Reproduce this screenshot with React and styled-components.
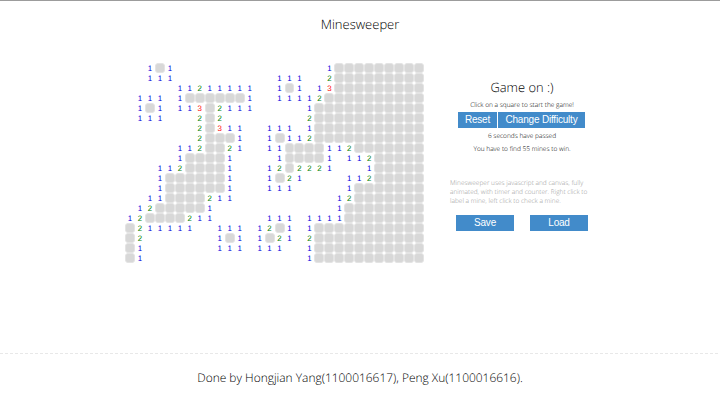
import React from "react";
import styled, { createGlobalStyle } from "styled-components";

const GlobalStyle = createGlobalStyle`
  * { box-sizing: border-box; }
  body {
    margin: 0;
    background: #fff;
    color: #000;
    font-family: "Open Sans", "Noto Sans", sans-serif;
    font-weight: 300;
    text-rendering: geometricPrecision;
    -webkit-font-smoothing: antialiased;
  }
`;

// "#" is a covered square, "." an empty opened one, digits count nearby mines.
const BOARD = [
  "..1#1...............1#########",
  "..111..........111..2#########",
  ".....11211111..1#1.13#########",
  ".111.1######1..11112##########",
  ".1#1.113#2111.....1###########",
  ".111...2#2........2###########",
  ".......2#311..111.1###########",
  ".......2###1..1#112###########",
  ".....112##21..11####112#######",
  ".....1####1....1####1.112#####",
  "...112####1...12#2221...1#####",
  "...1######1...1#21....112#####",
  "...1######1...111.....1#######",
  "..11####211..........12#######",
  ".12#####1............1########",
  "12####211.....111.1111########",
  "#211111..111.12#1.1###########",
  "#2.......1#1.1#21.2###########",
  "#1.......111.111..1###########",
  "#1................1###########",
];

const DIGIT_COLORS = { 1: "#0000dd", 2: "#007f00", 3: "#ff0000" };

const Page = styled.div`
  width: 720px;
  height: 400px;
  display: flex;
  flex-direction: column;
  border-top: 1px solid #9c9c9c;
  overflow: hidden;
`;

const Title = styled.h1`
  margin: 14px 0 0;
  height: 19px;
  font-size: 13px;
  line-height: 19px;
  font-weight: 300;
  text-align: center;
`;

const Main = styled.main`
  display: flex;
  height: 319px;
  padding: 29px 0 0 125px;
`;

const Board = styled.div`
  display: grid;
  grid-template-columns: repeat(30, 9.98px);
  grid-auto-rows: 9.99px;
  align-content: start;
  width: 300px;
  flex: none;
`;

const Square = styled.div`
  display: flex;
`;

const Cover = styled.div`
  flex: 1;
  background: #d8d8d8;
  border: 1px solid #e4e4e4;
  border-radius: 3px;
`;

const Digit = styled.span`
  flex: 1;
  padding-top: 1px;
  font: 400 7.9px/9px "Liberation Sans", Arial, sans-serif;
  text-align: center;
  color: ${(p) => DIGIT_COLORS[p.$value]};
`;

const Side = styled.aside`
  width: 144px;
  margin: 14px 0 0 25px;
  display: flex;
  flex-direction: column;
`;

const Status = styled.h2`
  margin: 0;
  height: 21px;
  font-size: 12.9px;
  line-height: 21px;
  font-weight: 300;
  text-align: center;
`;

const Note = styled.p`
  margin: 0;
  height: ${(p) => p.$height}px;
  font-size: 6.55px;
  line-height: ${(p) => p.$height}px;
  text-align: center;
  white-space: nowrap;
`;

const Buttons = styled.div`
  display: flex;
  justify-content: center;
  gap: ${(p) => p.$gap}px;
`;

const Actions = styled(Buttons)`
  margin-top: 0.5px;
  padding-right: 1px;
`;

const Button = styled.button`
  width: ${(p) => p.$width}px;
  height: 16px;
  padding: 0;
  border: 0;
  background: #428bca;
  color: #fff;
  font: 400 10px/16px "Liberation Sans", Arial, sans-serif;
  letter-spacing: -0.2px;
  white-space: nowrap;
`;

const About = styled.p`
  margin: 25.5px 0 10px;
  font-size: 6.53px;
  line-height: 9.1px;
  color: #999;
  white-space: nowrap;
`;

const Footer = styled.footer`
  height: 46px;
  padding-top: 14px;
  font-size: 11.95px;
  line-height: 20px;
  text-align: center;
`;

const Rule = styled.svg`
  display: block;
  flex: none;
`;

export default function App() {
  return (
    <Page>
      <GlobalStyle />
      <Title>Minesweeper</Title>
      <Main>
        <Board>
          {[...BOARD.join("")].map((cell, i) => (
            <Square key={i}>
              {cell === "#" && <Cover />}
              {cell > "0" && <Digit $value={cell}>{cell}</Digit>}
            </Square>
          ))}
        </Board>
        <Side>
          <Status>Game on :)</Status>
          <Note $height={13}>Click on a square to start the game!</Note>
          <Actions $gap={1}>
            <Button $width={39}>Reset</Button>
            <Button $width={87}>Change Difficulty</Button>
          </Actions>
          <Note $height={16}>6 seconds have passed</Note>
          <Note $height={9}>You have to find 55 mines to win.</Note>
          <About>
            Minesweeper uses javascript and canvas, fully
            <br />
            animated, with timer and counter. Right click to
            <br />
            label a mine, left click to check a mine.
          </About>
          <Buttons $gap={16}>
            <Button $width={58}>Save</Button>
            <Button $width={58}>Load</Button>
          </Buttons>
        </Side>
      </Main>
      <Rule width="720" height="1">
        <line x1="0" y1="0.5" x2="720" y2="0.5" stroke="#e8e8e8" strokeDasharray="3 2" />
      </Rule>
      <Footer>Done by Hongjian Yang(1100016617), Peng Xu(1100016616).</Footer>
    </Page>
  );
}
